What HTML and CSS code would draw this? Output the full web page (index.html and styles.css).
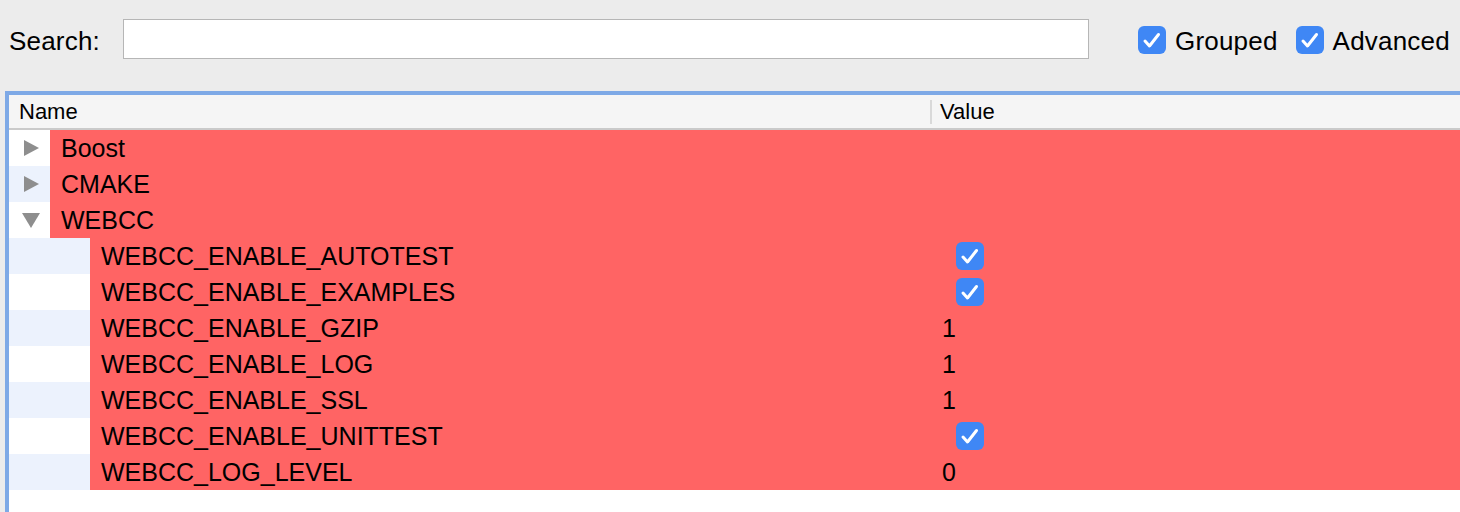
FILE: index.html
```html
<!DOCTYPE html>
<html>
<head>
<meta charset="utf-8">
<link rel="stylesheet" href="styles.css">
</head>
<body>
<div class="window">
  <div class="toolbar">
    <span class="search-label">Search:</span>
    <div class="search-input"></div>
    <label class="opt opt-grouped">
      <span class="cb"><svg viewBox="0 0 28 28" width="28" height="28"><path d="M7 15 L11.5 20 L20.5 8.5" fill="none" stroke="#fff" stroke-width="3" stroke-linecap="round" stroke-linejoin="round"/></svg></span>
      <span class="opt-text">Grouped</span>
    </label>
    <label class="opt opt-advanced">
      <span class="cb"><svg viewBox="0 0 28 28" width="28" height="28"><path d="M7 15 L11.5 20 L20.5 8.5" fill="none" stroke="#fff" stroke-width="3" stroke-linecap="round" stroke-linejoin="round"/></svg></span>
      <span class="opt-text">Advanced</span>
    </label>
  </div>
  <div class="table">
    <div class="thead">
      <div class="th th-name">Name</div>
      <div class="th th-value"><span class="sep"></span>Value</div>
    </div>
    <div class="tbody">
      <div class="row">
        <div class="name-cell"><div class="indent top"><span class="arrow right"></span></div><div class="label">Boost</div></div>
        <div class="value-cell"></div>
      </div>
      <div class="row alt">
        <div class="name-cell"><div class="indent top"><span class="arrow right"></span></div><div class="label">CMAKE</div></div>
        <div class="value-cell"></div>
      </div>
      <div class="row">
        <div class="name-cell"><div class="indent top"><span class="arrow down"></span></div><div class="label">WEBCC</div></div>
        <div class="value-cell"></div>
      </div>
      <div class="row alt">
        <div class="name-cell"><div class="indent child"></div><div class="label">WEBCC_ENABLE_AUTOTEST</div></div>
        <div class="value-cell"><span class="cb vcb"><svg viewBox="0 0 28 28" width="28" height="28"><path d="M7 15 L11.5 20 L20.5 8.5" fill="none" stroke="#fff" stroke-width="3" stroke-linecap="round" stroke-linejoin="round"/></svg></span></div>
      </div>
      <div class="row">
        <div class="name-cell"><div class="indent child"></div><div class="label">WEBCC_ENABLE_EXAMPLES</div></div>
        <div class="value-cell"><span class="cb vcb"><svg viewBox="0 0 28 28" width="28" height="28"><path d="M7 15 L11.5 20 L20.5 8.5" fill="none" stroke="#fff" stroke-width="3" stroke-linecap="round" stroke-linejoin="round"/></svg></span></div>
      </div>
      <div class="row alt">
        <div class="name-cell"><div class="indent child"></div><div class="label">WEBCC_ENABLE_GZIP</div></div>
        <div class="value-cell"><span class="val">1</span></div>
      </div>
      <div class="row">
        <div class="name-cell"><div class="indent child"></div><div class="label">WEBCC_ENABLE_LOG</div></div>
        <div class="value-cell"><span class="val">1</span></div>
      </div>
      <div class="row alt">
        <div class="name-cell"><div class="indent child"></div><div class="label">WEBCC_ENABLE_SSL</div></div>
        <div class="value-cell"><span class="val">1</span></div>
      </div>
      <div class="row">
        <div class="name-cell"><div class="indent child"></div><div class="label">WEBCC_ENABLE_UNITTEST</div></div>
        <div class="value-cell"><span class="cb vcb"><svg viewBox="0 0 28 28" width="28" height="28"><path d="M7 15 L11.5 20 L20.5 8.5" fill="none" stroke="#fff" stroke-width="3" stroke-linecap="round" stroke-linejoin="round"/></svg></span></div>
      </div>
      <div class="row alt">
        <div class="name-cell"><div class="indent child"></div><div class="label">WEBCC_LOG_LEVEL</div></div>
        <div class="value-cell"><span class="val">0</span></div>
      </div>
      <div class="row empty"></div>
    </div>
  </div>
</div>
</body>
</html>
```

FILE: styles.css
```css
* { box-sizing: border-box; }
html, body {
  margin: 0;
  padding: 0;
  width: 1460px;
  height: 512px;
  overflow: hidden;
  background: #ececec;
  font-family: "Liberation Sans", Arial, sans-serif;
  color: #000;
}
.window {
  width: 1460px;
  height: 512px;
  overflow: hidden;
}
.toolbar {
  height: 91px;
  display: flex;
  align-items: flex-start;
  padding-top: 19px;
  padding-left: 9px;
  font-size: 26px;
  letter-spacing: 0.2px;
}
.search-label {
  line-height: 41px;
  padding-top: 2px;
  width: 114px;
}
.search-input {
  width: 966px;
  height: 40px;
  background: #fff;
  border: 1px solid #b6b6b6;
}
.opt {
  display: flex;
  align-items: center;
  height: 41px;
  gap: 9px;
}
.opt-text { padding-top: 3px; }
.opt-grouped { margin-left: 49px; }
.opt-advanced { margin-left: 18px; }
.cb {
  display: inline-block;
  width: 28px;
  height: 28px;
  border-radius: 6px;
  background: #3f87f5;
  flex: none;
}
.cb svg { display: block; }

.table {
  margin-left: 5px;
  width: 1470px;
  height: 421px;
  background: #fff;
  border-top: 4px solid #7ea9e6;
  border-left: 4px solid #7ea9e6;
  box-shadow: inset 1px 1px 0 #5c8dd6;
}
.thead {
  height: 35px;
  background: #f5f5f5;
  border-bottom: 2px solid #cacaca;
  display: flex;
  font-size: 22px;
  line-height: 33px;
}
.th-name {
  width: 921px;
  padding-left: 10px;
}
.th-value {
  display: flex;
  align-items: center;
  flex: 1;
}
.sep {
  width: 2px;
  height: 24px;
  background: #d9d9d9;
  margin-right: 8px;
}
.row {
  height: 36px;
  display: flex;
  background: #fff;
  font-size: 25px;
  line-height: 36px;
}
.row.alt { background: #ecf2fd; }
.name-cell {
  width: 923px;
  display: flex;
  flex: none;
}
.indent {
  flex: none;
  display: flex;
  align-items: center;
}
.indent.top { width: 41px; padding-left: 15px; }
.indent.child { width: 81px; }
.label {
  flex: 1;
  background: #ff6464;
  padding-left: 11px;
  white-space: nowrap;
}
.value-cell {
  flex: 1;
  background: #ff6464;
  display: flex;
  align-items: center;
  padding-left: 10px;
}
.row.empty { background: #fff; }
.vcb { margin-left: 14px; }
.arrow { display: block; width: 0; height: 0; }
.arrow.right {
  border-top: 8px solid transparent;
  border-bottom: 8px solid transparent;
  border-left: 15px solid #8e8e8e;
}
.arrow.down {
  margin-left: -2px;
  border-left: 9px solid transparent;
  border-right: 9px solid transparent;
  border-top: 15px solid #8e8e8e;
}
```
